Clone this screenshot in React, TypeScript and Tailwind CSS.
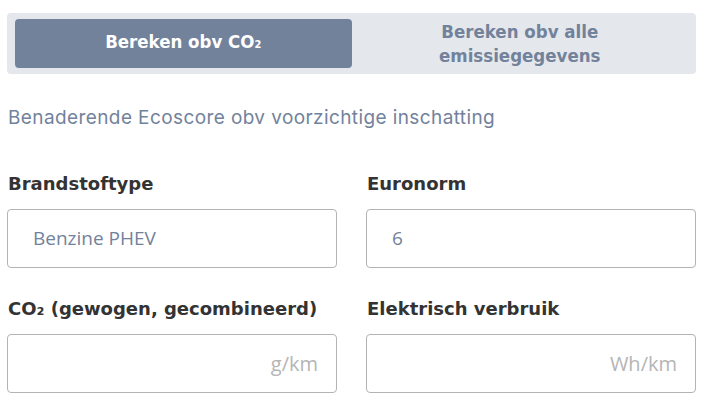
import { useState } from 'react';

const fields = [
  { label: 'Brandstoftype', value: 'Benzine PHEV', unit: '' },
  { label: 'Euronorm', value: '6', unit: '' },
  { label: 'CO₂ (gewogen, gecombineerd)', value: '', unit: 'g/km' },
  { label: 'Elektrisch verbruik', value: '', unit: 'Wh/km' },
];

export default function App() {
  const [mode, setMode] = useState<'co2' | 'all'>('co2');

  return (
    <div className="w-[713px] h-[417px] bg-white overflow-hidden pt-[13px] pl-[7px] font-['Open_Sans',sans-serif]">
      <div className="w-[689px]">
        {/* Mode switch */}
        <div className="grid grid-cols-2 rounded-[4px] bg-[#e4e7ec] px-[8px] py-[6px] font-['DejaVu_Sans_Condensed',sans-serif] text-[18.5px] font-bold leading-[24px]">
          <button
            onClick={() => setMode('co2')}
            className={`h-[49px] rounded-[4px] ${mode === 'co2' ? 'bg-[#72829b] text-white' : 'text-[#72829b]'}`}
          >
            Bereken obv CO<span className="text-[11px]">2</span>
          </button>
          <button
            onClick={() => setMode('all')}
            className={`h-[49px] rounded-[4px] ${mode === 'all' ? 'bg-[#72829b] text-white' : 'text-[#72829b]'}`}
          >
            Bereken obv alle
            <br />
            emissiegegevens
          </button>
        </div>

        <p className="mt-[32px] pl-[1px] font-['Inter',sans-serif] text-[19px] leading-[24px] tracking-[0.4px] text-[#72829b]">
          Benaderende Ecoscore obv voorzichtige inschatting
        </p>

        <div className="mt-[42px] grid grid-cols-2 gap-x-[29px] gap-y-[29px]">
          {fields.map((f) => (
            <label key={f.label} className="block">
              <span className="block pl-[1px] font-['DejaVu_Sans',sans-serif] text-[18px] font-bold leading-[24px] text-[#333]">
                {f.label}
              </span>
              <div className="mt-[13px] flex h-[59px] items-center rounded-[4px] border border-[#b3b3b3] pl-[25px] pr-[18px]">
                {f.value ? (
                  <span className="text-[19px] text-[#72829b]">{f.value}</span>
                ) : (
                  <span className="ml-auto text-[20px] text-[#b5b5b5]">{f.unit}</span>
                )}
              </div>
            </label>
          ))}
        </div>
      </div>
    </div>
  );
}
